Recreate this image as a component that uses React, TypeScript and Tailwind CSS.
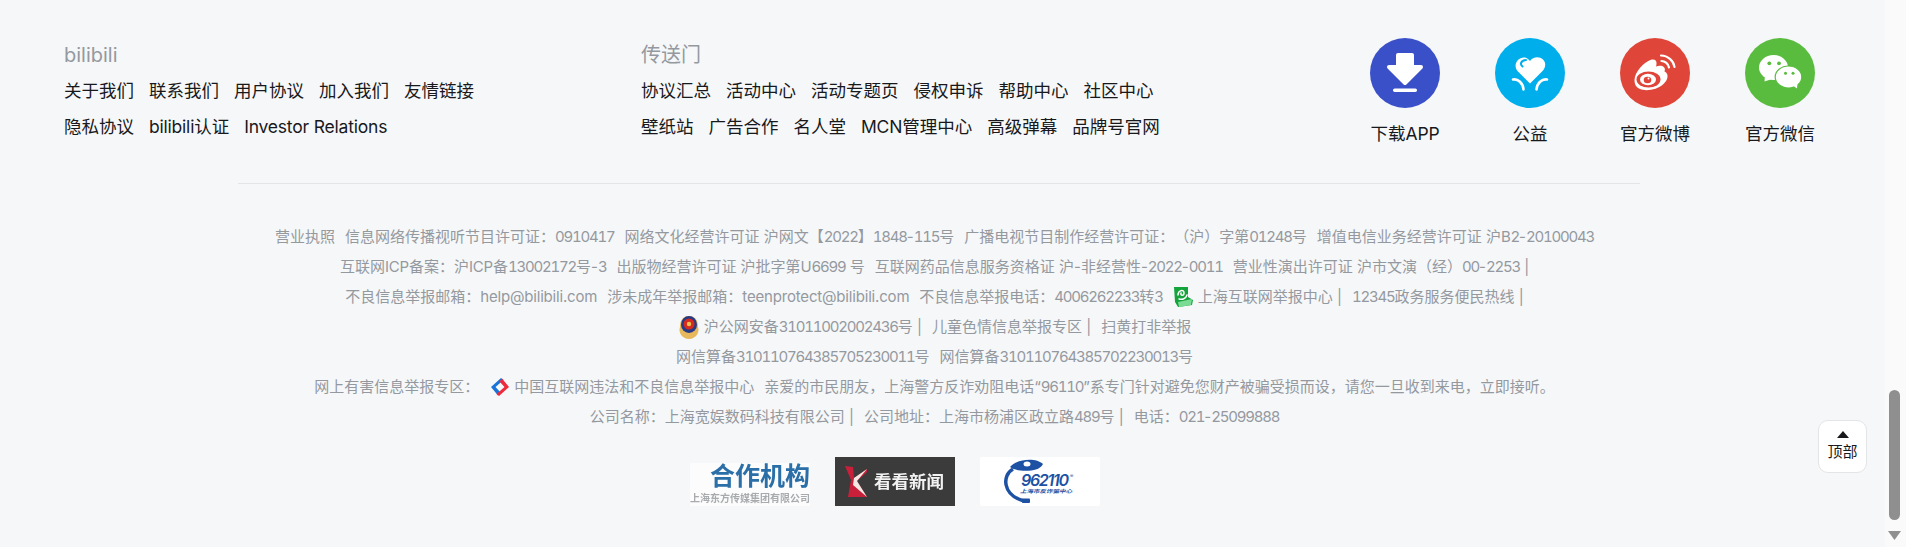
import React from 'react'

const FONT = 'font-[Inter,"Noto_Sans_CJK_SC",sans-serif]'

// digits and latin letters run a bit narrower in the original font
const fmt = (text: string) =>
  text.split(/(\d+|[A-Za-z@.]+)/).map((part, i) => {
    if (/^\d+$/.test(part)) return <span key={i} className="tracking-[-0.082em] tabular-nums">{part}</span>
    if (/^[A-Za-z@.]+$/.test(part)) return <span key={i} className="tracking-[-0.012em]">{part}</span>
    return part
  })

const col1 = [
  ['关于我们', '联系我们', '用户协议', '加入我们', '友情链接'],
  ['隐私协议', 'bilibili认证', 'Investor Relations'],
]
const col2 = [
  ['协议汇总', '活动中心', '活动专题页', '侵权申诉', '帮助中心', '社区中心'],
  ['壁纸站', '广告合作', '名人堂', 'MCN管理中心', '高级弹幕', '品牌号官网'],
]

const LinkColumn = ({ title, rows, className }: { title: string; rows: string[][]; className: string }) => (
  <div className={className}>
    <div className="h-[33px] text-[20px] leading-[30px] text-[#9499a0]">{title}</div>
    {rows.map((row, i) => (
      <div key={i} className="flex h-[36px] items-center gap-[15px] text-[17.5px] text-[#18191c]">
        {row.map((t) => (
          <a key={t} className="whitespace-nowrap">{fmt(t)}</a>
        ))}
      </div>
    ))}
  </div>
)

const DownloadIcon = () => (
  <svg viewBox="0 0 70 70" className="h-[70px] w-[70px]">
    <circle cx="35" cy="35" r="35" fill="#3a50c8" />
    <polygon points="28,17 42,17 42,29 51,29 35,45 19,29 28,29" fill="#fff" stroke="#fff" strokeWidth="4" strokeLinejoin="round" />
    <rect x="23" y="50.500" width="24" height="3.500" rx="1.700" fill="#fff" />
  </svg>
)

const CharityIcon = () => (
  <svg viewBox="0 0 70 70" className="h-[70px] w-[70px]">
    <circle cx="35" cy="35" r="35" fill="#00aeec" />
    <path d="M35 45.500 L22.500 33 C17.500 27 23 18.500 30 19.500 C32 20 34 21.500 35 23 C38 19 44 18 48 21.500 C51.500 25 50.500 30 47.500 33 Z" fill="#fff" />
    <path d="M27.500 28.500 C24.500 26 26 22.500 31 22" fill="none" stroke="#00aeec" strokeWidth="2" strokeLinecap="round" />
    <path d="M18 41.500 C23 40.500 28 45 28.500 51.500 M52 41.500 C47 40.500 42 45 41.500 51.500" fill="none" stroke="#fff" strokeWidth="2.600" strokeLinecap="round" />
  </svg>
)

const WeiboIcon = () => (
  <svg viewBox="0 0 70 70" className="h-[70px] w-[70px]">
    <circle cx="35" cy="35" r="35" fill="#df4639" />
    <path d="M14.500 42 C14.500 34 24 24 31 21.800 C36 20.300 37.500 24 36 28.500 C41 26.800 46.500 28.500 44.500 33.500 C48.500 35 49 41 43.500 46 C37 52 26 53.500 20 51 C16 49.500 14.500 46 14.500 42 Z" fill="#fff" />
    <ellipse cx="28.500" cy="41.500" rx="12" ry="8" fill="#df4639" />
    <ellipse cx="28" cy="41.500" rx="8" ry="5.800" fill="#fff" />
    <ellipse cx="27.500" cy="42" rx="3.800" ry="3.200" fill="#df4639" />
    <circle cx="28.500" cy="40.500" r="1" fill="#fff" />
    <path d="M41 17.500 C48 17.500 54 23.500 54.500 29 M41.500 23 C45 23 48.500 26 49 29.500" fill="none" stroke="#fff" strokeWidth="2.200" strokeLinecap="round" />
  </svg>
)

const WechatIcon = () => (
  <svg viewBox="0 0 70 70" className="h-[70px] w-[70px]">
    <circle cx="35" cy="35" r="35" fill="#59bc3f" />
    <ellipse cx="28.500" cy="29.500" rx="14.500" ry="12.500" fill="#fff" />
    <polygon points="20,37 27,41 19.500,43.500" fill="#fff" />
    <ellipse cx="43.500" cy="39" rx="13.300" ry="11" fill="#fff" stroke="#59bc3f" strokeWidth="1.200" />
    <polygon points="47,47 52.500,45 52,50.500" fill="#fff" />
    <circle cx="24.300" cy="25.300" r="1.900" fill="#59bc3f" />
    <circle cx="34" cy="25.300" r="1.900" fill="#59bc3f" />
    <circle cx="40.500" cy="35.300" r="1.500" fill="#59bc3f" />
    <circle cx="48" cy="35.300" r="1.500" fill="#59bc3f" />
  </svg>
)

const socials = [
  { label: '下载APP', icon: <DownloadIcon /> },
  { label: '公益', icon: <CharityIcon /> },
  { label: '官方微博', icon: <WeiboIcon /> },
  { label: '官方微信', icon: <WechatIcon /> },
]

const PoliceBadge = () => (
  <svg viewBox="0 0 22 24" className="mr-[4px] h-[24px] w-[22px] shrink-0">
    <path d="M11 1 C17 1 20 5 20 12 C22 17 18 24 11 24 C4 24 0 17 2 12 C2 5 5 1 11 1 Z" fill="#e8b95c" />
    <ellipse cx="11" cy="9.500" rx="8" ry="8.500" fill="#273a86" />
    <circle cx="11" cy="9" r="5.500" fill="#d42a1f" />
    <circle cx="11" cy="9" r="2.200" fill="#edc04e" />
  </svg>
)

const ShanghaiIcon = () => (
  <svg viewBox="0 0 20 20" className="mr-[5px] h-[20px] w-[20px] shrink-0">
    <path d="M1 0 L15 0 L15 10 L20 13 L19 18 L5 20 L2 15 Z" fill="#15a33c" />
    <path d="M5 15 L19 12 L18 18 L6 20 Z" fill="#7adb94" />
    <path d="M5 8 C5 3 11 2 11 6 C11 9 7 9 8 6 M6 12 C10 13 13 11 14 8" fill="none" stroke="#fff" strokeWidth="1.500" strokeLinecap="round" />
  </svg>
)

const ReportIcon = () => (
  <svg viewBox="0 0 20 18" className="mr-[4px] ml-[11px] h-[18px] w-[20px] shrink-0">
    <path d="M11 0 L1 9 L8 17.500 L10.500 14.500 L5.500 9 L13.500 2 Z" fill="#1a74d8" />
    <path d="M9 18 L19 9 L12 0.500 L9.500 3.500 L14.500 9 L6.500 16 Z" fill="#ee2b3b" />
  </svg>
)

const lines: React.ReactNode[][] = [
  ['营业执照', '信息网络传播视听节目许可证：0910417', '网络文化经营许可证 沪网文【2022】1848-115号', '广播电视节目制作经营许可证：（沪）字第01248号', '增值电信业务经营许可证 沪B2-20100043'],
  ['互联网ICP备案：沪ICP备13002172号-3', '出版物经营许可证 沪批字第U6699 号', '互联网药品信息服务资格证 沪-非经营性-2022-0011', '营业性演出许可证 沪市文演（经）00-2253 |'],
  ['不良信息举报邮箱：help@bilibili.com', '涉未成年举报邮箱：teenprotect@bilibili.com', '不良信息举报电话：4006262233转3', <span className="flex items-center"><ShanghaiIcon />上海互联网举报中心 |</span>, '12345政务服务便民热线 |'],
  [<span className="flex items-center"><PoliceBadge /><span>{fmt('沪公网安备31011002002436号 |')}</span></span>, '儿童色情信息举报专区 |', '扫黄打非举报'],
  ['网信算备310110764385705230011号', '网信算备310110764385702230013号'],
  [<span className="flex items-center">网上有害信息举报专区：<ReportIcon />中国互联网违法和不良信息举报中心</span>, '亲爱的市民朋友，上海警方反诈劝阻电话“96110”系专门针对避免您财产被骗受损而设，请您一旦收到来电，立即接听。'],
  ['公司名称：上海宽娱数码科技有限公司 |', '公司地址：上海市杨浦区政立路489号 |', '电话：021-25099888'],
]

const PartnerLogo = () => (
  <div className="mt-[6px] flex h-[43px] w-[120px] flex-col items-end bg-[#fcfcfc] blur-[0.4px]">
    <div className="text-[25px] leading-[27px] font-bold text-[#2b6fa8]">合作机构</div>
    <div className="mt-[1px] w-full text-[10px] leading-[14px] font-bold whitespace-nowrap text-[#a8abae]">上海东方传媒集团有限公司</div>
  </div>
)

const KankanLogo = () => (
  <div className="flex h-[49px] w-[120px] items-center bg-[#3b3b3c] pl-[10px]">
    <svg viewBox="0 0 22 31" className="h-[31px] w-[22px] shrink-0">
      <path d="M0 0 L8 1 L9 12 L22 3 L22 6 L12 15 L22 31 L3 31 L6 14 Z" fill="#c8203a" />
      <path d="M9 12 L22 3 L12 15 L22 31 L8 19 Z" fill="#f4e8e4" />
    </svg>
    <span className="ml-[7px] text-[17.500px] leading-none font-bold whitespace-nowrap text-[#f2f2f2] blur-[0.3px]">看看新闻</span>
  </div>
)

const PhoneLogo = () => (
  <div className="h-[49px] w-[120px] rounded-[2px] bg-white">
    <svg viewBox="0 0 120 49" className="h-[49px] w-[120px]">
      <path d="M30 10 C36 2 56 0 63 7 C60 15 38 16 30 10 Z" fill="#1d51a3" />
      <ellipse cx="47" cy="7" rx="3.500" ry="2.500" fill="#fff" />
      <path d="M33 12 C22 18 22 38 44 44" fill="none" stroke="#1d51a3" strokeWidth="3.500" />
      <rect x="42" y="41.500" width="8" height="4.500" rx="1" fill="#1d51a3" />
      <text x="41" y="29" fontSize="16" fontStyle="italic" fontWeight="600" textLength="48" fill="#1d51a3" fontFamily="Inter, sans-serif">962110</text>
      <text x="90" y="21" fontSize="5" fill="#1d51a3" fontFamily="Inter, sans-serif">®</text>
      <text x="40" y="36" fontSize="5" fontStyle="italic" fontWeight="700" textLength="52" lengthAdjust="spacingAndGlyphs" fill="#1d51a3" fontFamily="Noto Sans CJK SC, sans-serif">上海市反诈骗中心</text>
    </svg>
  </div>
)

export default function App() {
  return (
    <div className={`flex h-[547px] w-full overflow-hidden bg-[#f6f7f8] [text-spacing-trim:space-all] ${FONT}`}>
      <main className="relative min-w-0 flex-1">
        <div className="flex pt-[38px] pl-[64px]">
          <LinkColumn title="bilibili" rows={col1} className="w-[577px] pt-[2px]" />
          <LinkColumn title="传送门" rows={col2} className="w-[729px] pt-[2px]" />
          <div className="flex gap-[55px]">
            {socials.map((s) => (
              <div key={s.label} className="flex w-[70px] flex-col items-center">
                {s.icon}
                <span className="mt-[10px] text-[17.500px] leading-[32px] whitespace-nowrap text-[#18191c]">{fmt(s.label)}</span>
              </div>
            ))}
          </div>
        </div>

        <div className="mt-[33px] ml-[238px] h-px w-[1402px] bg-[#e3e5e7]" />

        <div className="mt-[38px] pr-[16px] text-[15px] leading-[30px] text-[#9499a0]">
          {lines.map((items, i) => (
            <div key={i} className="flex h-[30px] items-center justify-center gap-[10px] whitespace-nowrap">
              {items.map((item, j) => (
                <span key={j}>{typeof item === 'string' ? fmt(item) : item}</span>
              ))}
            </div>
          ))}
        </div>

        <div className="mt-[25px] ml-[690px] flex gap-[25px]">
          <PartnerLogo />
          <KankanLogo />
          <PhoneLogo />
        </div>

        {/* back to top */}
        <button className="absolute top-[420px] left-[1818px] flex h-[53px] w-[49px] flex-col items-center justify-center rounded-[10px] border border-[#e3e5e7] bg-white text-[#18191c]">
          <svg viewBox="0 0 12 7" className="mb-[4px] h-[7px] w-[12px]">
            <path d="M6 0 L12 7 L0 7 Z" fill="#18191c" />
          </svg>
          <span className="text-[15px] leading-[20px]">顶部</span>
        </button>
      </main>

      {/* window scrollbar */}
      <div className="flex w-[21px] shrink-0 flex-col items-center bg-[#fafafa] pr-[2px]">
        <div className="mt-[390px] h-[130px] w-[11px] rounded-full bg-[#8f8f8f]" />
        <svg viewBox="0 0 13 9" className="mt-[11px] h-[9px] w-[13px]">
          <path d="M0 0 L13 0 L6.500 9 Z" fill="#8f8f8f" />
        </svg>
      </div>
    </div>
  )
}
